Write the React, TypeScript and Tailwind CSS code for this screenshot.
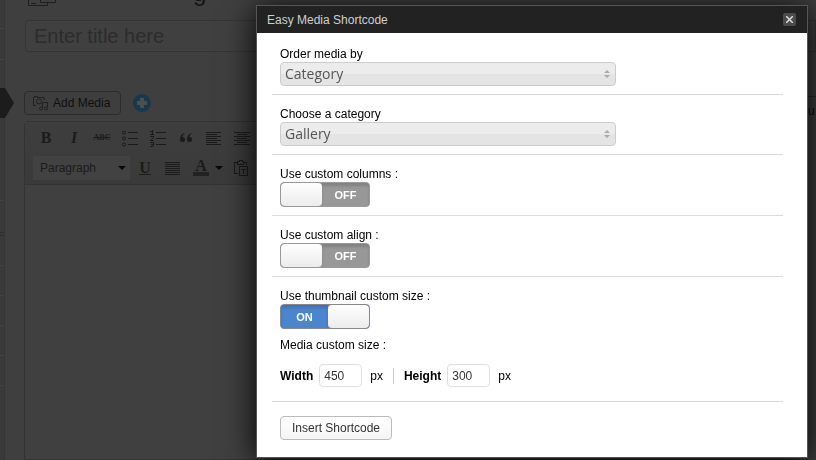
import { useState } from "react";
import type { ReactNode } from "react";

const sans = "font-['Liberation_Sans',Arial,sans-serif]";

function Glyph({ w = 18, h = 18, children }: { w?: number; h?: number; children: ReactNode }) {
  return (
    <svg width={w} height={h} viewBox={`0 0 ${w} ${h}`} fill="none" stroke="#1b1b1b" shapeRendering="crispEdges" aria-hidden="true">
      {children}
    </svg>
  );
}

function ToolButton({ label, children }: { label: string; children: ReactNode }) {
  return (
    <button type="button" aria-label={label} className="flex h-5 w-7 shrink-0 items-center justify-center font-['Liberation_Serif',serif] text-base leading-5 font-bold text-[#1b1b1b]">
      {children}
    </button>
  );
}

function Editor() {
  return (
    <section className="mt-1.5 flex-1 rounded-t-sm border border-[#333] bg-[#404040]">
      <div className="flex flex-col gap-2 border-b border-[#333] bg-linear-to-b from-[#3e3e3e] to-[#3a3a3a] px-[7px] pt-1.5 pb-1">
        <div className="flex h-5 items-center">
          <ToolButton label="Bold">B</ToolButton>
          <ToolButton label="Italic"><i>I</i></ToolButton>
          <ToolButton label="Strikethrough"><s className="text-[8px]">ABC</s></ToolButton>
          <ToolButton label="Bulleted list">
            <Glyph>
              <path d="M7 3.5h10M7 9.5h10M7 15.5h10" />
              <g shapeRendering="auto"><circle cx="3" cy="3.5" r="1.5" /><circle cx="3" cy="9.5" r="1.5" /><circle cx="3" cy="15.5" r="1.5" /></g>
            </Glyph>
          </ToolButton>
          <ToolButton label="Numbered list">
            <Glyph>
              <path d="M7 3.5h10M7 9.5h10M7 15.5h10" />
              <path d="M1 2.500h2M1 5.500h4M1 7.500h3M3 9.500h1M2 10.500h1M1 11.500h4M1 13.500h3M2 15.500h2M1 17.500h3" />
              <path d="M3.500 1v4M4.500 7v2M4.500 13v4" />
            </Glyph>
          </ToolButton>
          <ToolButton label="Quote">
            <Glyph w={14} h={12}>
              <g stroke="none" fill="#1b1b1b" shapeRendering="auto">
                <path d="M5.500 1C2.500 2 1 4 1 7.500a2.500 2.500 0 1 0 2.500-2.500C3.500 3.500 4 2.500 5.500 1.700z" />
                <path d="M12.500 1C9.500 2 8 4 8 7.500a2.500 2.500 0 1 0 2.500-2.500c0-1.500.5-2.500 2-3.300z" />
              </g>
            </Glyph>
          </ToolButton>
          <ToolButton label="Align left">
            <Glyph w={16} h={14}><path d="M0 1.500h15M0 3.500h11M0 5.500h15M0 7.500h11M0 9.500h15M0 11.500h11M0 13.500h15" /></Glyph>
          </ToolButton>
          <ToolButton label="Align center">
            <Glyph w={16} h={14}><path d="M0 1.500h16M3 3.500h10M0 5.500h16M3 7.500h10M0 9.500h16M3 11.500h10M0 13.500h16" /></Glyph>
          </ToolButton>
        </div>
        <div className="flex items-center">
          <button type="button" className="mx-px flex h-6 w-[97px] items-center justify-between bg-[#424242] pr-1 pl-[7px] text-xs text-[#1b1b1b]">
            Paragraph
            <svg width="8" height="4" aria-hidden="true"><path d="M0 0h8L4 4z" fill="#080808" /></svg>
          </button>
          <ToolButton label="Underline"><u>U</u></ToolButton>
          <ToolButton label="Justify">
            <Glyph w={16} h={14}><path d="M0 1.500h15M0 3.500h15M0 5.500h15M0 7.500h15M0 9.500h15M0 11.500h15M0 13.500h15" /></Glyph>
          </ToolButton>
          <ToolButton label="Text colour">
            <span className="border-b-4 border-[#222] px-0.5 leading-3">A</span>
          </ToolButton>
          <svg className="mr-1" width="8" height="4" aria-hidden="true"><path d="M0 0h8L4 4z" fill="#080808" /></svg>
          <ToolButton label="Paste as text">
            <Glyph w={16} h={17}>
              <path d="M5 13.500H1.500v-11H4M11 2.500h2.500V5M4.500 4.500h6v-3h-1.500v-1h-3v1h-1.500zM6.500 6.500h8v9h-8z" />
              <path d="M8 9.500h5M10.500 9v5" />
            </Glyph>
          </ToolButton>
        </div>
      </div>
    </section>
  );
}

function MenuEdge() {
  return (
    <aside className="flex w-[5px] shrink-0 flex-col border-r border-[#353535] bg-[#3a3a3a]">
      <div className="mt-7 h-8 border-y border-[#434343]" />
      <svg className="relative mt-7 shrink-0 overflow-visible" width="14" height="30" aria-hidden="true">
        <path d="M0 0h5l9 15-9 15H0z" fill="#1c1c1c" />
      </svg>
      <div className="mt-[82px] h-8 border-t border-[#434343]" />
      <div className="h-1 border-y border-[#2e2e2e]" />
      {[0, 1, 2, 3, 4].map((n) => <div key={n} className="h-[30px] border-b border-[#434343]" />)}
    </aside>
  );
}

function Backdrop() {
  return (
    <div className="flex min-h-screen bg-[#3f3f3f]">
      <MenuEdge />
      <main className="flex min-w-0 flex-1 flex-col pl-[19px]">
        <header className="flex h-5 items-end overflow-hidden">
          <svg className="ml-1 self-start" width="28" height="8" fill="none" stroke="#1f1f1f" aria-hidden="true">
            <path d="M.5 0v5.500h19V2.500M12.500 0v2.500h15V0M3 3.500h5" />
          </svg>
          <h2 className="mb-[15px] ml-[137px] text-2xl leading-6 text-[#141414]">g</h2>
        </header>
        <input aria-label="Title" placeholder="Enter title here" className="ml-px h-8 rounded-l-sm border border-[#353535] bg-[#404040] px-2 text-xl placeholder:text-[#2c2c2c]" />
        <div className="flex flex-1">
          <div className="flex min-w-0 flex-1 flex-col">
            <div className="mt-[39px] flex items-center gap-3">
              <button type="button" className="flex h-6 items-center gap-1 rounded-sm border border-[#2c2c2c] bg-[#3e3e3e] px-[7px] pr-2.5 text-xs text-[#0f0f0f]">
                <svg width="17" height="16" fill="none" stroke="#202020" aria-hidden="true">
                  <path d="M4 10.500H1.500v-8h1v-1h3v1h6.500V5" /><circle cx="7" cy="6.500" r="2.500" />
                  <path d="M10.500 13V7.500h5V12" /><circle cx="9" cy="13.500" r="1.500" /><circle cx="14" cy="13.500" r="1.500" />
                </svg>
                Add Media
              </button>
              <button type="button" aria-label="Add shortcode">
                <svg width="18" height="18" aria-hidden="true"><circle cx="9" cy="9" r="9" fill="#16394d" /><path d="M9 4v10M4 9h10" stroke="#4a4f52" strokeWidth="4" /></svg>
              </button>
            </div>
            <Editor />
          </div>
          <div className="mt-11 w-2 border-t border-[#262626] pt-1.5 text-xs leading-4 text-[#0a0a0a]">u</div>
        </div>
      </main>
    </div>
  );
}

function Toggle({ label, initial }: { label: string; initial: boolean }) {
  const [on, setOn] = useState(initial);
  return (
    <label className="relative block w-fit">
      {label}
      <input type="checkbox" checked={on} onChange={() => setOn(!on)} className="sr-only" />
      <span className={`flex h-[25px] w-[90px] overflow-hidden rounded-sm border text-[11px] leading-6 text-white ${on ? "flex-row border-[#888] bg-[#4a85cf]" : "flex-row-reverse border-[#999] bg-[#989898]"}`}>
        <span className="flex-1 text-center font-bold shadow-[inset_0_3px_3px_rgba(0,0,0,0.15)]">{on ? "ON" : "OFF"}</span>
        <span className="w-[41px] rounded-sm bg-linear-to-b from-[#fefefe] to-[#ececec]" />
      </span>
    </label>
  );
}

function SelectField({ label, options }: { label: string; options: string[] }) {
  return (
    <label className="block">
      {label}
      <span className="grid w-[336px] max-w-full items-center">
        <select className="col-start-1 row-start-1 h-6 appearance-none rounded-sm border border-[#ccc] bg-linear-to-b from-[#ececec] from-50% to-[#e4e4e4] to-50% px-1 font-['Open_Sans',sans-serif] text-sm leading-5 text-[#555]">
          {options.map((o) => <option key={o}>{o}</option>)}
        </select>
        <svg className="pointer-events-none col-start-1 row-start-1 mr-1.5 justify-self-end" width="6" height="8" aria-hidden="true"><path d="M0 3l3-3 3 3zM0 5h6L3 8z" fill="#aaa" /></svg>
      </span>
    </label>
  );
}

function Row({ children }: { children: ReactNode }) {
  return <div className="border-b border-[#dadada] px-2 pt-[11px] pb-2">{children}</div>;
}

function SizeField({ label, value }: { label: string; value: string }) {
  return (
    <label className="flex items-center">
      <b className="mr-1.5">{label}</b>
      <input defaultValue={value} className="mr-2 h-[23px] w-[43px] rounded-sm border border-[#dfdfdf] px-1 text-[#333]" />
      px
    </label>
  );
}

function Dialog() {
  return (
    <div role="dialog" aria-label="Easy Media Shortcode" className="fixed top-[5px] right-2 w-[552px] max-w-full border border-[#555] bg-white text-xs text-black shadow-[0_4px_30px_#000]">
      <header className="flex h-[27px] items-center justify-between bg-[#222] pr-[11px] pl-2.5 text-[#cfcfcf]">
        <h1>Easy Media Shortcode</h1>
        <button type="button" aria-label="Close" className="flex size-[13px] items-center justify-center rounded-xs bg-[#4c4c4c]">
          <svg width="7" height="7" aria-hidden="true"><path d="M0 0l7 7M7 0L0 7" stroke="#ddd" strokeWidth="1.500" /></svg>
        </button>
      </header>
      <form className="pt-0.5 pr-6 pb-[17px] pl-[15px]" onSubmit={(e) => e.preventDefault()}>
        <Row><SelectField label="Order media by" options={["Category", "Date"]} /></Row>
        <Row><SelectField label="Choose a category" options={["Gallery"]} /></Row>
        <Row><Toggle label="Use custom columns :" initial={false} /></Row>
        <Row><Toggle label="Use custom align :" initial={false} /></Row>
        <Row>
          <Toggle label="Use thumbnail custom size :" initial />
          <p className="mt-2">Media custom size :</p>
          <div className="mt-[11px] mb-1.5 flex items-center gap-2.5">
            <SizeField label="Width" value="450" />
            <span className="h-4 w-px bg-[#ccc]" />
            <SizeField label="Height" value="300" />
          </div>
        </Row>
        <button type="submit" className="mt-3.5 ml-2 h-6 w-28 rounded-sm border border-[#bbb] bg-linear-to-b from-white to-[#f4f4f4] text-[#333]">Insert Shortcode</button>
      </form>
    </div>
  );
}

export default function App() {
  return (
    <div className={sans}>
      <Backdrop />
      <Dialog />
    </div>
  );
}
